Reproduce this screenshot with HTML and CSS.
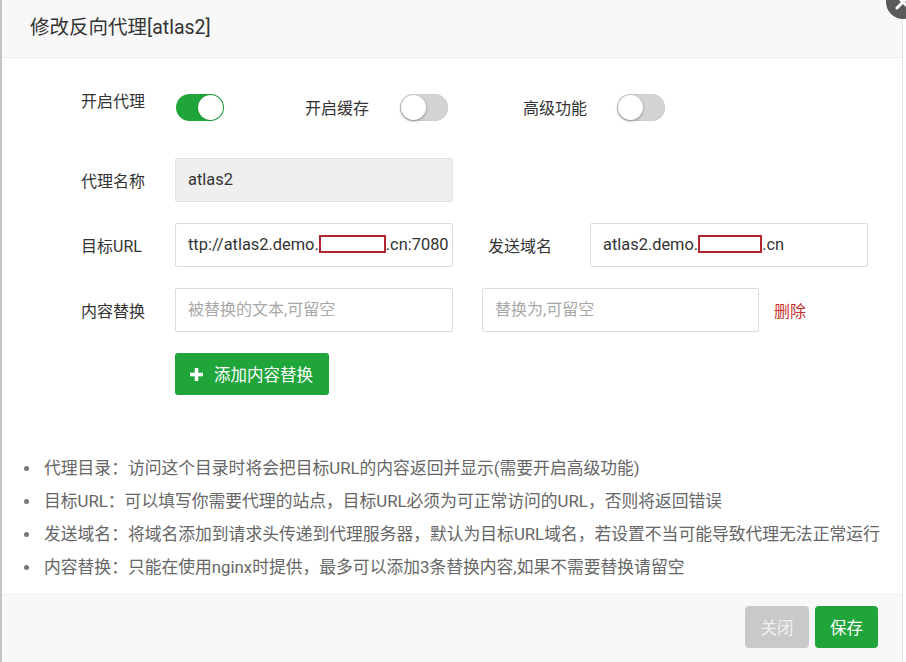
FILE: index.html
```html
<!DOCTYPE html>
<html lang="zh-CN">
<head>
<meta charset="utf-8">
<title>修改反向代理[atlas2]</title>
<link rel="stylesheet" href="styles.css">
</head>
<body>
<div class="page">
  <div class="dialog">
    <div class="header">修改反向代理[atlas2]</div>
    <span class="close-btn"><svg viewBox="0 0 34 34" width="34" height="34"><circle cx="17" cy="17" r="17" fill="#5a5a5a"/><path d="M11 11 L23 23 M23 11 L11 23" stroke="#fff" stroke-width="3" stroke-linecap="round"/></svg></span>
    <div class="body">
      <div class="form">
        <div class="row toggles">
          <span class="label first">开启代理</span>
          <span class="switch on"><span class="knob"></span></span>
          <span class="label second">开启缓存</span>
          <span class="switch"><span class="knob"></span></span>
          <span class="label third">高级功能</span>
          <span class="switch"><span class="knob"></span></span>
        </div>
        <div class="row">
          <span class="label">代理名称</span>
          <div class="input disabled">atlas2</div>
        </div>
        <div class="row">
          <span class="label">目标URL</span>
          <div class="input scrolled"><span class="txt">ttp://atlas2.demo.<span class="redact r1"></span>.cn:7080</span></div>
          <span class="label label2">发送域名</span>
          <div class="input">atlas2.demo.<span class="redact r2"></span>.cn</div>
        </div>
        <div class="row">
          <span class="label">内容替换</span>
          <div class="input placeholder">被替换的文本,可留空</div>
          <div class="input placeholder narrow">替换为,可留空</div>
          <span class="delete">删除</span>
        </div>
        <div class="row">
          <span class="label"></span>
          <button class="btn-add"><svg viewBox="0 0 13 13" width="13" height="13"><rect x="4.7" y="0" width="3.6" height="13" fill="#fff"/><rect x="0" y="4.7" width="13" height="3.6" fill="#fff"/></svg>添加内容替换</button>
        </div>
      </div>
      <ul class="tips">
        <li>代理目录：访问这个目录时将会把目标URL的内容返回并显示(需要开启高级功能)</li>
        <li>目标URL：可以填写你需要代理的站点，目标URL必须为可正常访问的URL，否则将返回错误</li>
        <li>发送域名：将域名添加到请求头传递到代理服务器，默认为目标URL域名，若设置不当可能导致代理无法正常运行</li>
        <li>内容替换：只能在使用nginx时提供，最多可以添加3条替换内容,如果不需要替换请留空</li>
      </ul>
    </div>
    <div class="footer">
      <button class="btn btn-close">关闭</button>
      <button class="btn btn-save">保存</button>
    </div>
  </div>
</div>
</body>
</html>
```
FILE: styles.css
```css
* { box-sizing: border-box; }
html, body { margin: 0; padding: 0; }
body {
  width: 906px;
  height: 662px;
  overflow: hidden;
  background: #fff;
  font-family: "Roboto", "Noto Sans CJK SC", sans-serif;
  color: #333;
}
.page {
  height: 662px;
  border-left: 2px solid #c4c4c4;
}
.dialog {
  position: relative;
  width: 901px;
  height: 662px;
  border-right: 1px solid #e2e2e2;
  display: flex;
  flex-direction: column;
}
.header {
  height: 58px;
  flex: none;
  background: #f8f8f8;
  border-bottom: 1px solid #ececec;
  padding-left: 28px;
  font-size: 19.5px;
  line-height: 55px;
  color: #333;
}
.close-btn {
  position: absolute;
  top: -15px;
  right: -18px;
  width: 34px;
  height: 34px;
  display: block;
}
.close-btn svg { display: block; }
.body {
  flex: 1;
  background: #fff;
}
.form {
  padding: 35px 0 0 79px;
}
.row {
  display: flex;
  align-items: center;
  margin-bottom: 21px;
}
.row.toggles {
  height: 30px;
  margin-bottom: 35px;
}
.label {
  width: 65px;
  margin-right: 29px;
  font-size: 16px;
  color: #333;
  white-space: nowrap;
  flex: none;
}
.toggles .label { margin-bottom: 3px; }
.label.first { align-self: flex-start; margin-top: -5px; margin-right: 30px; }
.label.second { margin-left: 81px; margin-right: 30px; }
.label.third { margin-left: 75px; margin-right: 29px; }
.label.label2 { margin-left: 35px; margin-right: 37px; }
.switch {
  position: relative;
  width: 48px;
  height: 27px;
  border-radius: 14px;
  background: #d4d4d4;
  flex: none;
  box-shadow: inset 0 0 0 1px #cdcdcd;
  margin-top: -1px;
}
.switch .knob {
  position: absolute;
  top: 1px;
  left: 1px;
  width: 25px;
  height: 25px;
  border-radius: 50%;
  background: #fff;
  box-shadow: 0 1px 3px rgba(0,0,0,0.35);
}
.switch.on {
  background: #20a53a;
  box-shadow: none;
}
.switch.on .knob {
  left: 22px;
  box-shadow: 0 0 2px rgba(0,0,0,0.25);
}
.input {
  width: 278px;
  height: 44px;
  border: 1px solid #dcdcdc;
  border-radius: 2px;
  background: #fff;
  padding-left: 12px;
  font-size: 16.4px;
  line-height: 42px;
  color: #333;
  white-space: nowrap;
  overflow: hidden;
  flex: none;
}
.input.disabled {
  background: #efefef;
  border-color: #e3e3e3;
}
.input.placeholder { color: #a8a8a8; font-size: 16px; }
.input.narrow {
  width: 277px;
  margin-left: 29px;
}
.redact {
  display: inline-block;
  height: 18px;
  border: 2px solid #b3242f;
  background: #fff;
  vertical-align: middle;
  margin-top: -3px;
}
.redact.r1 { width: 67px; }
.redact.r2 { width: 64px; }
.delete {
  margin-left: 15px;
  color: #c9302c;
  font-size: 16px;
}
.btn-add {
  width: 154px;
  height: 42px;
  border: none;
  border-radius: 3px;
  background: #20a53a;
  color: #fff;
  font-family: "Roboto", "Noto Sans CJK SC", sans-serif;
  font-size: 16.5px;
  padding: 0 0 0 15px;
  display: flex;
  align-items: center;
  gap: 11px;
  margin-top: 0;
}
.btn-add svg { display: block; flex: none; }
.tips {
  list-style: none;
  margin: 0;
  padding: 36px 0 0 42px;
}
.tips li {
  position: relative;
  font-size: 16.8px;
  line-height: 33px;
  color: #666;
  white-space: nowrap;
}
.tips li::before {
  content: "";
  position: absolute;
  left: -20px;
  top: 14px;
  width: 5px;
  height: 5px;
  border-radius: 50%;
  background: #777;
}
.footer {
  height: 68px;
  flex: none;
  background: #f8f8f8;
  border-top: 1px solid #ececec;
  display: flex;
  justify-content: flex-end;
  align-items: flex-start;
  padding: 11px 24px 0 0;
  gap: 6px;
}
.btn {
  height: 42px;
  border: none;
  border-radius: 4px;
  font-family: "Roboto", "Noto Sans CJK SC", sans-serif;
  font-size: 16.5px;
  color: #fff;
  padding: 0;
}
.btn-close {
  width: 64px;
  background: #c9c9c9;
  color: #f2f2f2;
}
.btn-save {
  width: 63px;
  background: #20a53a;
}
```
